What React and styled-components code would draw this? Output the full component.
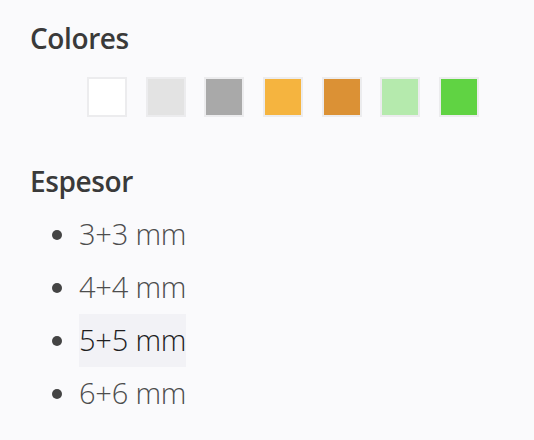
import React from "react";
import styled, { createGlobalStyle } from "styled-components";

const GlobalStyle = createGlobalStyle`
  html, body {
    margin: 0;
    padding: 0;
    background: #fafafc;
  }
  body {
    font-family: "Open Sans", "Noto Sans", sans-serif;
  }
`;

const Panel = styled.div`
  padding: 18px 0 0 30px;
  width: 534px;
  height: 440px;
  box-sizing: border-box;
`;

const Heading = styled.h2`
  margin: 0;
  font-size: 28px;
  line-height: 40px;
  font-weight: 600;
  color: #3a3a3a;
  letter-spacing: -0.4px;
`;

const Swatches = styled.div`
  display: flex;
  gap: 18.7px;
  margin: 19px 0 44px 57px;
`;

const Swatch = styled.div`
  width: 40px;
  height: 40px;
  box-sizing: border-box;
  border: 2px solid #ececee;
  background: ${(p) => p.color};
`;

const List = styled.ul`
  margin: 7px 0 0 0;
  padding: 0 0 0 49px;
  list-style: disc;
  color: #4d4d4d;
`;

const Item = styled.li`
  font-size: 29px;
  line-height: 52px;
  font-weight: 300;
  letter-spacing: -0.2px;
  &::marker {
    color: #444;
  }
`;

const Label = styled.span`
  display: inline-block;
  height: 53px;
  color: ${(p) => (p.active ? "#1e1e1e" : "#4d4d4d")};
  background: ${(p) => (p.active ? "#f2f2f6" : "transparent")};
`;

const colors = ["#ffffff", "#e3e3e3", "#a9a9a9", "#f5b43f", "#db9135", "#b5eaad", "#60d343"];
const sizes = ["3+3 mm", "4+4 mm", "5+5 mm", "6+6 mm"];

export default function App() {
    return (
        <>
            <GlobalStyle/>
            <Panel>
                <Heading>Colores</Heading>
                <Swatches>
                    {colors.map((c) => <Swatch key={c} color={c}/>)}
                </Swatches>
                <Heading>Espesor</Heading>
                <List>
                    {sizes.map((s) => (
                        <Item key={s}>
                            <Label active={s === "5+5 mm"}>{s}</Label>
                        </Item>
                    ))}
                </List>
            </Panel>
        </>
    );
}
